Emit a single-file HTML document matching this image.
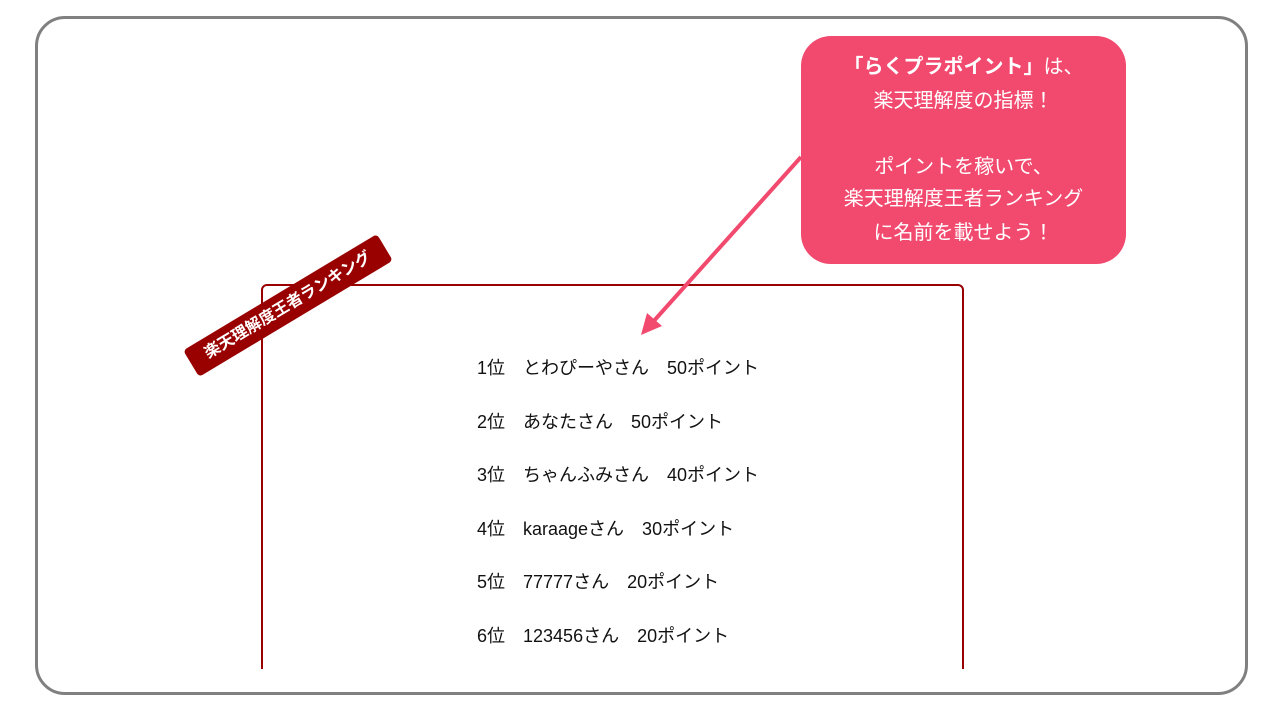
<!DOCTYPE html>
<html><head><meta charset="utf-8"><style>
html,body{margin:0;padding:0;width:1280px;height:720px;background:#fff;overflow:hidden;font-family:"Liberation Sans","Noto Sans CJK JP",sans-serif;}
.frame{position:absolute;left:35px;top:16px;width:1207px;height:673px;border:3px solid #808080;border-radius:30px;box-sizing:content-box;}
.callout{position:absolute;left:801px;top:36px;width:325px;height:228px;background:#f2496e;border-radius:30px;color:#fff;font-size:20px;text-align:center;}
.callout div{position:absolute;left:0;width:100%;line-height:26px;}
.clip{position:absolute;left:0;top:0;width:1280px;height:669px;overflow:hidden;}
.box{position:absolute;left:261px;top:284px;width:699px;height:420px;border:2px solid #990000;border-radius:6px;}
.row{position:absolute;left:477px;font-size:18px;color:#111;line-height:22px;white-space:pre;}
.badge{position:absolute;left:175px;top:290px;width:226px;height:31px;background:#990000;border-radius:4px;color:#fff;font-weight:bold;font-size:16px;line-height:31px;text-align:center;transform:rotate(-31deg);}
</style></head><body>
<div class="frame"></div>
<div class="clip"><div class="box"></div></div>
<div class="badge">楽天理解度王者ランキング</div>
<div class="row" style="top:357px">1位　とわぴーやさん　50ポイント</div>
<div class="row" style="top:411px">2位　あなたさん　50ポイント</div>
<div class="row" style="top:464px">3位　ちゃんふみさん　40ポイント</div>
<div class="row" style="top:518px">4位　karaageさん　30ポイント</div>
<div class="row" style="top:571px">5位　77777さん　20ポイント</div>
<div class="row" style="top:625px">6位　123456さん　20ポイント</div>
<svg style="position:absolute;left:0;top:0" width="1280" height="720">
<line x1="801" y1="157" x2="652" y2="323" stroke="#f2496e" stroke-width="4"/>
<polygon points="641,335 647,313 662,326" fill="#f2496e"/>
</svg>
<div class="callout">
<div style="top:18px"><b>「らくプラポイント」</b>は、</div>
<div style="top:52px">楽天理解度の指標！</div>
<div style="top:118px">ポイントを稼いで、</div>
<div style="top:150px">楽天理解度王者ランキング</div>
<div style="top:184px">に名前を載せよう！</div>
</div>
</body></html>
